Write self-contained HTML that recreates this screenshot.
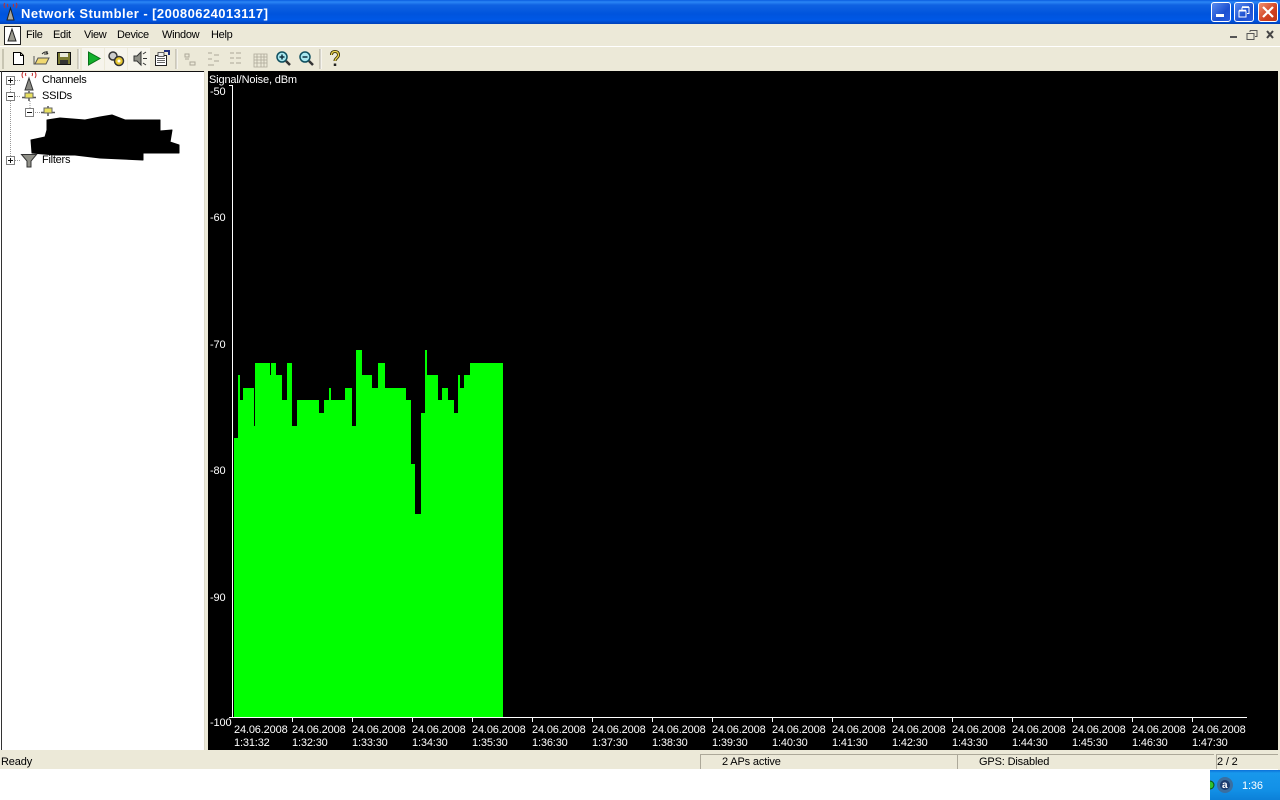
<!DOCTYPE html>
<html><head><meta charset="utf-8"><title>Network Stumbler</title>
<style>
html,body{margin:0;padding:0;width:1280px;height:800px;overflow:hidden;background:#fff;font-family:"Liberation Sans",sans-serif;font-size:11px;color:#000}
div,span,svg{position:absolute}
.t{white-space:nowrap;line-height:13px;letter-spacing:-.15px}
.m{letter-spacing:-.3px}
.w{color:#fff}
</style></head><body>
<div style="left:0;top:0;width:1280px;height:24px;background:linear-gradient(#0a5ce0 0,#2b86f5 2px,#0f62e2 5px,#0054dd 14px,#0058e6 20px,#0040b8 24px)"></div>
<div class="t" style="left:21px;top:6px;color:#fff;font-weight:bold;font-size:13px;line-height:16px;letter-spacing:.44px">Network Stumbler - [20080624013117]</div>
<svg style="left:2px;top:2px" width="18" height="20"><path d="M8.500 6L12 18H5z" fill="#a8a8a0" stroke="#222" stroke-width="1"/><path d="M3 6Q1 3 3 1M14 6Q16 3 14 1M6 5Q5 3 6 2M11 5Q12 3 11 2" stroke="#c03030" fill="none"/></svg>
<!-- window buttons -->
<div style="left:1211px;top:2px;width:18px;height:18px;border:1px solid #fff;border-radius:3px;background:linear-gradient(135deg,#5a8cf0,#1c50d0 60%,#2a5ce0)"></div>
<div style="left:1216px;top:14px;width:8px;height:3px;background:#fff"></div>
<div style="left:1234px;top:2px;width:18px;height:18px;border:1px solid #fff;border-radius:3px;background:linear-gradient(135deg,#5a8cf0,#1c50d0 60%,#2a5ce0)"></div>
<svg style="left:1238px;top:6px" width="12" height="12"><path d="M4 1.500h7v6H9M4 1.500V4M1 5h7v6H1z" fill="none" stroke="#fff"/><path d="M4 1h7M1 4.500h7" stroke="#fff" stroke-width="1.500"/></svg>
<div style="left:1258px;top:2px;width:18px;height:18px;border:1px solid #fff;border-radius:3px;background:linear-gradient(135deg,#f09070,#d04020 60%,#c03818)"></div>
<svg style="left:1261px;top:5px" width="14" height="14"><path d="M2 2L12 12M12 2L2 12" stroke="#fff" stroke-width="2.200"/></svg>
<!-- menu -->
<div style="left:0;top:24px;width:1280px;height:48px;background:#ece9d8"></div>
<div style="left:0;top:46px;width:1280px;height:1px;background:#fff"></div>
<div style="left:4px;top:26px;width:15px;height:17px;background:#fff;border:1px solid #222"></div>
<svg style="left:5px;top:27px" width="14" height="16"><path d="M7 2L11 14H3z" fill="#9a9a90" stroke="#222"/></svg>
<div class="t m" style="left:26px;top:29px">File</div>
<div class="t m" style="left:53px;top:29px">Edit</div>
<div class="t m" style="left:84px;top:29px">View</div>
<div class="t m" style="left:117px;top:29px">Device</div>
<div class="t m" style="left:162px;top:29px">Window</div>
<div class="t m" style="left:211px;top:29px">Help</div>
<svg style="left:1226px;top:27px" width="52" height="16"><path d="M4 10h7" stroke="#555" stroke-width="2"/><path d="M24 3.500h7v6h-2M24 3.500V5M21 6.500h7v6h-7z" fill="none" stroke="#555"/><path d="M41 4l6 7M47 4l-6 7" stroke="#444" stroke-width="2"/></svg>
<!-- toolbar -->
<div style="left:2px;top:49px;width:2px;height:20px;background:#c8c5b2"></div>
<svg style="left:0;top:46px" width="350" height="25">
<path d="M13.500 6.500h7l3 3v9H13.500zM20.500 6.500v3h3" fill="#fff" stroke="#000"/>
<path d="M34 10V18H46L49 12H38L35 18" fill="#f0d870" stroke="#555"/><path d="M42 8Q46 4 48 8M47 5v3h-3" fill="none" stroke="#222"/>
<path d="M57.500 6.500h13v12h-13z" fill="#7a7a30" stroke="#111"/><path d="M60 7h8v4h-8z" fill="#e8e8d8"/><path d="M60 14h8v4h-8z" fill="#333"/>
<path d="M78 3v20" stroke="#aca899"/><path d="M79 3v20" stroke="#fff"/>
<rect x="82" y="2" width="22" height="22" fill="#f6f4ec"/>
<path d="M88.500 6L100 12.500 88.500 19z" fill="#12b02c" stroke="#087018"/>
<rect x="105" y="2" width="22" height="22" fill="#f6f4ec"/>
<circle cx="113" cy="10" r="4" fill="#ccc" stroke="#333" stroke-width="1.500"/><circle cx="119" cy="15" r="4.500" fill="#e8c830" stroke="#333" stroke-width="1.500"/><circle cx="119" cy="15" r="1.500" fill="#fff"/>
<rect x="128" y="2" width="22" height="22" fill="#f6f4ec"/>
<path d="M134 10h3l4-4v13l-4-4h-3z" fill="#909088" stroke="#333"/><path d="M143 8l3-2M143 12.500h4M143 17l3 2" stroke="#333"/>
<path d="M155.500 9.500h11v10h-11z" fill="#fff" stroke="#222"/><path d="M158 6.500h6v4h-6zM157 12.500h8M157 14.500h8M157 16.500h8" fill="#eee" stroke="#333" stroke-width=".8"/><path d="M164 5h5v4" fill="none" stroke="#203080" stroke-width="2"/>
<path d="M176 3v20" stroke="#aca899"/><path d="M177 3v20" stroke="#fff"/>
<g stroke="#aca899" fill="none"><path d="M185 8h4v3h-4zM190 16h5v3h-5zM185 13h4"/><path d="M208 7h4M214 9h5M208 13h4M214 15h5M208 19h4M213 18v2"/><path d="M230 7h4M236 7h5M230 12h4M236 12h5M230 17h4M236 17h5"/><path d="M254 8h13v13h-13zM254 11h13M254 14h13M254 17h13M257 8v13M261 8v13M264 8v13" stroke-width=".8"/></g>
<circle cx="282" cy="11" r="5" fill="#a8e8f0" stroke="#105060" stroke-width="1.500"/><path d="M279.500 11h5M282 8.500v5" stroke="#103040" stroke-width="1.500"/><path d="M286 15l4 4" stroke="#333" stroke-width="2.500"/>
<circle cx="305" cy="11" r="5" fill="#a8e8f0" stroke="#105060" stroke-width="1.500"/><path d="M302.500 11h5" stroke="#103040" stroke-width="1.500"/><path d="M309 15l4 4" stroke="#333" stroke-width="2.500"/>
<path d="M320 3v20" stroke="#aca899"/><path d="M321 3v20" stroke="#fff"/>
<path d="M331.500 9Q331.500 5.500 335 5.500T338.500 9C338.500 12 335 12 335 15" fill="none" stroke="#3a3208" stroke-width="3"/><path d="M331.500 9Q331.500 5.500 335 5.500T338.500 9C338.500 12 335 12 335 15" fill="none" stroke="#f0d850" stroke-width="1.200"/><path d="M335 17.500v2.500" stroke="#222" stroke-width="2.500"/>
</svg>
<!-- tree pane -->
<div style="left:0;top:71px;width:205px;height:680px;background:#fff;border-top:1px solid #111;box-sizing:border-box"></div>
<div style="left:1px;top:71px;width:1px;height:680px;background:#333"></div>
<div style="left:204px;top:71px;width:1px;height:680px;background:#dedbcb"></div>
<div style="left:205px;top:70px;width:3px;height:682px;background:#ece9d8"></div>
<svg style="left:0;top:71px" width="90" height="100">
<g stroke="#999" stroke-dasharray="1 1" fill="none"><path d="M10.500 14V85M15 9.500h5M15 25.500h5M15 89.500h5M30 30V37M35 41.500h5"/></g>
<g fill="#fff" stroke="#808080"><path d="M6.500 5.500h8v8h-8zM6.500 21.500h8v8h-8zM25.500 37.500h8v8h-8zM6.500 85.500h8v8h-8z"/></g>
<g stroke="#111"><path d="M8 9.500h5M10.500 7v5M8 25.500h5M27 41.500h5M8 89.500h5M10.500 87v5"/></g>
<path d="M29 7L33 19H25z" fill="#8a8a84" stroke="#333"/>
<path d="M23 7Q21 4 23 1M35 7Q37 4 35 1M26 5Q25 3 26 2M32 5Q33 3 32 2" fill="none" stroke="#c02828"/>
<path d="M22 26.500h14M29 20v10" stroke="#555" stroke-width="1.500"/><rect x="25" y="22" width="8" height="5" fill="#e8e060" stroke="#666"/>
<path d="M41 41.500h14M48 35v10" stroke="#555" stroke-width="1.500"/><rect x="44" y="37" width="8" height="5" fill="#e8e060" stroke="#666"/>
<path d="M21.500 83.500h15L31 90v6h-4v-6z" fill="#909088" stroke="#333"/>
</svg>
<div class="t" style="left:42px;top:74px;letter-spacing:-.25px">Channels</div>
<div class="t" style="left:42px;top:90px;letter-spacing:-.25px">SSIDs</div>
<div class="t" style="left:42px;top:154px;letter-spacing:-.25px">Filters</div>
<svg style="left:0;top:71px" width="200" height="100"><path transform="translate(0,-71)" d="M47 120L60 118 85 120 100 117 112 115 125 120H160V131L172 130 170 142 179 145V153H143V160L100 158 75 155 55 155 32 153 31 140 45 137 47 130z" fill="#000" stroke="#000" stroke-linejoin="round" stroke-width="1"/></svg>
<!-- chart -->
<div style="left:208px;top:71px;width:1070px;height:679px;background:#000"></div>
<svg style="left:208px;top:70px" width="1070" height="680">
<g transform="translate(-208,-70)">
<path fill="#00ff00" d="M234 717V438H238V375H240V400H243V388H254V426H255V363H270V375H271V363H276V375H282V400H287V363H292V426H297V400H319V413H324V400H329V388H331V400H345V388H352V426H356V350H362V375H372V388H378V363H385V388H406V400H411V464H415V514H421V413H425V350H427V375H438V400H442V388H448V400H454V413H458V375H460V388H464V375H470V363H503V717z"/>
<path d="M232.500 85V718M229 85.500h4M229 717.500h4M233 717.500H1247" stroke="#fff" fill="none"/>
<path stroke="#fff" d="M292.500 717v5M352.500 717v5M412.500 717v5M472.500 717v5M532.500 717v5M592.500 717v5M652.500 717v5M712.500 717v5M772.500 717v5M832.500 717v5M892.500 717v5M952.500 717v5M1012.500 717v5M1072.500 717v5M1132.500 717v5M1192.500 717v5"/>
</g></svg>
<div class="t w" style="left:209px;top:74px">Signal/Noise, dBm</div>
<div class="t w" style="left:210px;top:86px">-50</div>
<div class="t w" style="left:210px;top:212px">-60</div>
<div class="t w" style="left:210px;top:339px">-70</div>
<div class="t w" style="left:210px;top:465px">-80</div>
<div class="t w" style="left:210px;top:592px">-90</div>
<div class="t w" style="left:210px;top:717px">-100</div>
<div class="t w" style="left:234px;top:724px">24.06.2008<br>1:31:32</div>
<div class="t w" style="left:292px;top:724px">24.06.2008<br>1:32:30</div>
<div class="t w" style="left:352px;top:724px">24.06.2008<br>1:33:30</div>
<div class="t w" style="left:412px;top:724px">24.06.2008<br>1:34:30</div>
<div class="t w" style="left:472px;top:724px">24.06.2008<br>1:35:30</div>
<div class="t w" style="left:532px;top:724px">24.06.2008<br>1:36:30</div>
<div class="t w" style="left:592px;top:724px">24.06.2008<br>1:37:30</div>
<div class="t w" style="left:652px;top:724px">24.06.2008<br>1:38:30</div>
<div class="t w" style="left:712px;top:724px">24.06.2008<br>1:39:30</div>
<div class="t w" style="left:772px;top:724px">24.06.2008<br>1:40:30</div>
<div class="t w" style="left:832px;top:724px">24.06.2008<br>1:41:30</div>
<div class="t w" style="left:892px;top:724px">24.06.2008<br>1:42:30</div>
<div class="t w" style="left:952px;top:724px">24.06.2008<br>1:43:30</div>
<div class="t w" style="left:1012px;top:724px">24.06.2008<br>1:44:30</div>
<div class="t w" style="left:1072px;top:724px">24.06.2008<br>1:45:30</div>
<div class="t w" style="left:1132px;top:724px">24.06.2008<br>1:46:30</div>
<div class="t w" style="left:1192px;top:724px">24.06.2008<br>1:47:30</div>
<!-- right edge and status -->
<div style="left:1278px;top:71px;width:2px;height:699px;background:#ece9d8"></div>
<div style="left:0;top:750px;width:1280px;height:19px;background:#ece9d8"></div>
<div style="left:700px;top:754px;width:1px;height:15px;background:#aca899"></div>
<div style="left:700px;top:754px;width:257px;height:1px;background:#aca899"></div>
<div style="left:957px;top:754px;width:1px;height:15px;background:#aca899"></div>
<div style="left:958px;top:754px;width:256px;height:1px;background:#aca899"></div>
<div style="left:1216px;top:754px;width:1px;height:15px;background:#aca899"></div>
<div style="left:1216px;top:754px;width:62px;height:1px;background:#aca899"></div>
<div class="t" style="left:1px;top:756px">Ready</div>
<div class="t" style="left:722px;top:756px">2 APs active</div>
<div class="t" style="left:979px;top:756px">GPS: Disabled</div>
<div class="t" style="left:1217px;top:756px">2 / 2</div>
<div style="left:0;top:769px;width:1210px;height:31px;background:#fff"></div>
<!-- tray -->
<div style="left:1210px;top:770px;width:70px;height:30px;background:linear-gradient(#0c70d8 0,#1898ec 3px,#1290e6 20px,#0c80d8 30px)"></div>
<svg style="left:1210px;top:774px" width="30" height="24"><circle cx="0" cy="11" r="4" fill="#30c030" stroke="#0a5010"/><circle cx="15" cy="11" r="8" fill="#3a6ea0"/><circle cx="15" cy="11" r="5" fill="#1c3c70"/></svg>
<div class="t" style="left:1222px;top:779px;color:#fff;font-weight:bold;font-size:10px">a</div>
<div class="t" style="left:1242px;top:780px;color:#fff">1:36</div>
</body></html>
